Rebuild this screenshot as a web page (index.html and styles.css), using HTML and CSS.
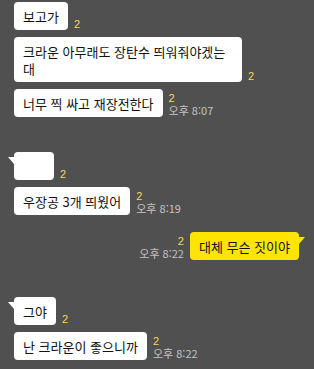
FILE: index.html
```html
<!DOCTYPE html>
<html lang="ko">
<head>
<meta charset="utf-8">
<link rel="stylesheet" href="styles.css">
</head>
<body>
<div class="chat">
  <div class="group in">
    <div class="row"><div class="bubble">보고가</div><div class="meta"><span class="count">2</span></div></div>
    <div class="row"><div class="bubble">크라운 아무래도 장탄수 띄워줘야겠는 대</div><div class="meta"><span class="count">2</span></div></div>
    <div class="row"><div class="bubble">너무 찍 싸고 재장전한다</div><div class="meta"><span class="count">2</span><span class="time">오후 8:07</span></div></div>
  </div>
  <div class="group in g-far">
    <div class="row"><div class="bubble first empty"></div><div class="meta"><span class="count">2</span></div></div>
    <div class="row"><div class="bubble">우장공 3개 띄웠어</div><div class="meta"><span class="count">2</span><span class="time">오후 8:19</span></div></div>
  </div>
  <div class="group out g-near">
    <div class="row"><div class="meta"><span class="count">2</span><span class="time">오후 8:22</span></div><div class="bubble first">대체 무슨 짓이야</div></div>
  </div>
  <div class="group in g-far2">
    <div class="row"><div class="bubble first">그야</div><div class="meta"><span class="count">2</span></div></div>
    <div class="row"><div class="bubble">난 크라운이 좋으니까</div><div class="meta"><span class="count">2</span><span class="time">오후 8:22</span></div></div>
  </div>
</div>
</body>
</html>
```
FILE: styles.css
```css
html, body {
  margin: 0;
  padding: 0;
  background: #505050;
}
body {
  font-family: "Noto Sans CJK KR", "Noto Sans", sans-serif;
  width: 314px;
  height: 369px;
  overflow: hidden;
}
.chat {
  padding: 2px 15px 0 14px;
  display: flex;
  flex-direction: column;
}
.group {
  display: flex;
  flex-direction: column;
  gap: 7px;
}
.g-far { margin-top: 35px; }
.g-near { margin-top: 17px; }
.g-far2 { margin-top: 37px; }
.row {
  display: flex;
  align-items: flex-end;
  gap: 6px;
}
.out .row { justify-content: flex-end; }
.bubble {
  position: relative;
  background: #ffffff;
  color: #111111;
  font-size: 13px;
  line-height: 17px;
  padding: 6px 9px 5px 9px;
  border-radius: 4px;
  max-width: 210px;
}
.bubble.empty {
  width: 22px;
  height: 17px;
}
.out .bubble {
  background: #fee500;
}
.in .bubble.first::before {
  content: "";
  position: absolute;
  left: -6px;
  top: 5px;
  border-top: 7px solid #ffffff;
  border-left: 6px solid transparent;
}
.out .bubble.first::before {
  content: "";
  position: absolute;
  right: -6px;
  top: 5px;
  border-top: 7px solid #fee500;
  border-right: 6px solid transparent;
}
.meta {
  display: flex;
  flex-direction: column;
  align-items: flex-start;
  font-family: "Liberation Sans", "Noto Sans CJK KR", sans-serif;
  font-size: 11px;
}
.out .meta { align-items: flex-end; }
.count {
  color: #f2d95c;
  line-height: 12px;
}
.time {
  color: #c4c4c4;
  font-family: "Noto Sans CJK KR", sans-serif;
  font-size: 11px;
  line-height: 13px;
}
```
